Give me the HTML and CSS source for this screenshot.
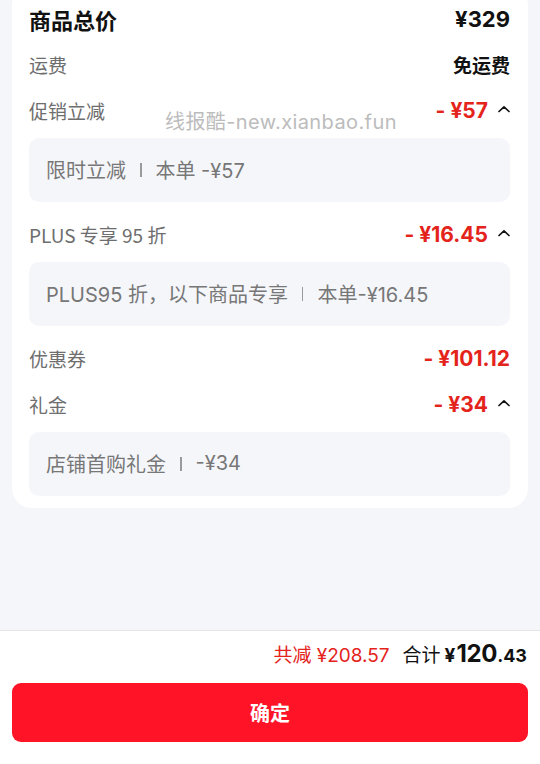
FILE: index.html
```html
<!DOCTYPE html>
<html lang="zh-CN">
<head>
<meta charset="utf-8">
<link rel="stylesheet" href="styles.css">
</head>
<body>
<div class="page">
  <div class="content">
    <div class="card">
      <div class="row row-main">
        <span class="label-main">商品总价</span>
        <span class="value-main">¥329</span>
      </div>
      <div class="row">
        <span class="label">运费</span>
        <span class="value-black">免运费</span>
      </div>
      <div class="row">
        <span class="label">促销立减</span>
        <span class="right"><span class="amount"><span class="minus">-</span>¥57</span><span class="caret"><svg width="12" height="8" viewBox="0 0 12 8"><path d="M1 6.5 L6 1.8 L11 6.5" fill="none" stroke="#111" stroke-width="1.7" stroke-linecap="round" stroke-linejoin="round"/></svg></span></span>
      </div>
      <div class="detail">限时立减<span class="sep"></span>本单 -¥57</div>
      <div class="row">
        <span class="label">PLUS 专享 95 折</span>
        <span class="right"><span class="amount"><span class="minus">-</span>¥16.45</span><span class="caret"><svg width="12" height="8" viewBox="0 0 12 8"><path d="M1 6.5 L6 1.8 L11 6.5" fill="none" stroke="#111" stroke-width="1.7" stroke-linecap="round" stroke-linejoin="round"/></svg></span></span>
      </div>
      <div class="detail">PLUS95 折，以下商品专享<span class="sep"></span>本单-¥16.45</div>
      <div class="row">
        <span class="label">优惠券</span>
        <span class="amount"><span class="minus">-</span>¥101.12</span>
      </div>
      <div class="row">
        <span class="label">礼金</span>
        <span class="right"><span class="amount"><span class="minus">-</span>¥34</span><span class="caret"><svg width="12" height="8" viewBox="0 0 12 8"><path d="M1 6.5 L6 1.8 L11 6.5" fill="none" stroke="#111" stroke-width="1.7" stroke-linecap="round" stroke-linejoin="round"/></svg></span></span>
      </div>
      <div class="detail detail-last">店铺首购礼金<span class="sep"></span>-¥34</div>
    </div>
  </div>
  <div class="footer">
    <div class="summary">
      <span class="saved">共减 ¥208.57</span>
      <span class="total-label">合计</span>
      <span class="total"><span class="yen">¥</span><span class="int">120</span><span class="dec">.43</span></span>
    </div>
    <div class="btn">确定</div>
  </div>
  <div class="watermark">线报酷-new.xianbao.fun</div>
</div>
</body>
</html>
```

FILE: styles.css
```css
* { box-sizing: border-box; }
html, body {
  margin: 0;
  padding: 0;
}
body {
  background: #f5f6fa;
  font-family: "Noto Sans CJK SC", "Noto Sans", sans-serif;
}
.page {
  position: relative;
  height: 764px;
  display: flex;
  flex-direction: column;
  overflow: hidden;
}
.content {
  flex: 1;
}
.card {
  margin: -15px 12px 0 12px;
  background: #fff;
  border-radius: 20px;
  padding: 11px 18px 12px 17px;
}
.row {
  height: 46px;
  display: flex;
  align-items: center;
  justify-content: space-between;
  padding-bottom: 1px;
}
.label-main {
  font-size: 22px;
  font-weight: 700;
  color: #111;
}
.value-main {
  font-size: 22px;
  font-weight: 700;
  color: #111;
  font-family: Inter, sans-serif;
}
.label {
  font-size: 19px;
  color: #6e6e6e;
}
.value-black {
  font-size: 19px;
  font-weight: 700;
  color: #111;
}
.right {
  display: flex;
  align-items: center;
}
.amount {
  font-size: 21px;
  font-weight: 700;
  color: #e4231b;
  font-family: Inter, sans-serif;
  letter-spacing: 0;
}
.minus {
  margin-right: 5px;
}
.caret {
  display: flex;
  width: 22px;
  justify-content: flex-end;
  padding-bottom: 3px;
}
.detail {
  height: 64px;
  margin: 4px 0 10px;
  background: #f5f6fa;
  border-radius: 10px;
  display: flex;
  align-items: center;
  padding-left: 17px;
  padding-bottom: 2px;
  font-size: 20px;
  color: #777;
  font-family: Inter, "Noto Sans CJK SC", sans-serif;
}
.detail-last {
  margin-bottom: 0;
}
.sep {
  display: inline-block;
  width: 1.5px;
  height: 14px;
  background: #9a9a9a;
  margin: 2px 14px 0;
}
.footer {
  height: 134px;
  background: #fff;
  border-top: 1px solid #e6e6ea;
  padding: 8px 12px 21px;
  display: flex;
  flex-direction: column;
}
.summary {
  height: 32px;
  display: flex;
  align-items: baseline;
  justify-content: flex-end;
  padding-right: 1px;
}
.saved {
  font-size: 19px;
  color: #e4231b;
  margin-right: 13px;
  font-family: Inter, "Noto Sans CJK SC", sans-serif;
}
.total-label {
  font-size: 19px;
  color: #111;
  margin-right: 4px;
}
.total {
  color: #111;
  font-weight: 700;
  font-family: Inter, sans-serif;
}
.yen { font-size: 19px; margin-right: 1px; }
.int { font-size: 24px; letter-spacing: -0.3px; }
.dec { font-size: 18px; }
.btn {
  margin-top: 12px;
  height: 59px;
  background: #fe1327;
  border-radius: 9px;
  color: #fff;
  font-size: 20px;
  font-weight: 700;
  display: flex;
  align-items: center;
  justify-content: center;
}
.watermark {
  position: absolute;
  left: 165px;
  top: 106px;
  font-size: 20px;
  letter-spacing: 0.4px;
  color: #bcbcbc;
  font-family: Inter, "Noto Sans CJK SC", sans-serif;
}
```
